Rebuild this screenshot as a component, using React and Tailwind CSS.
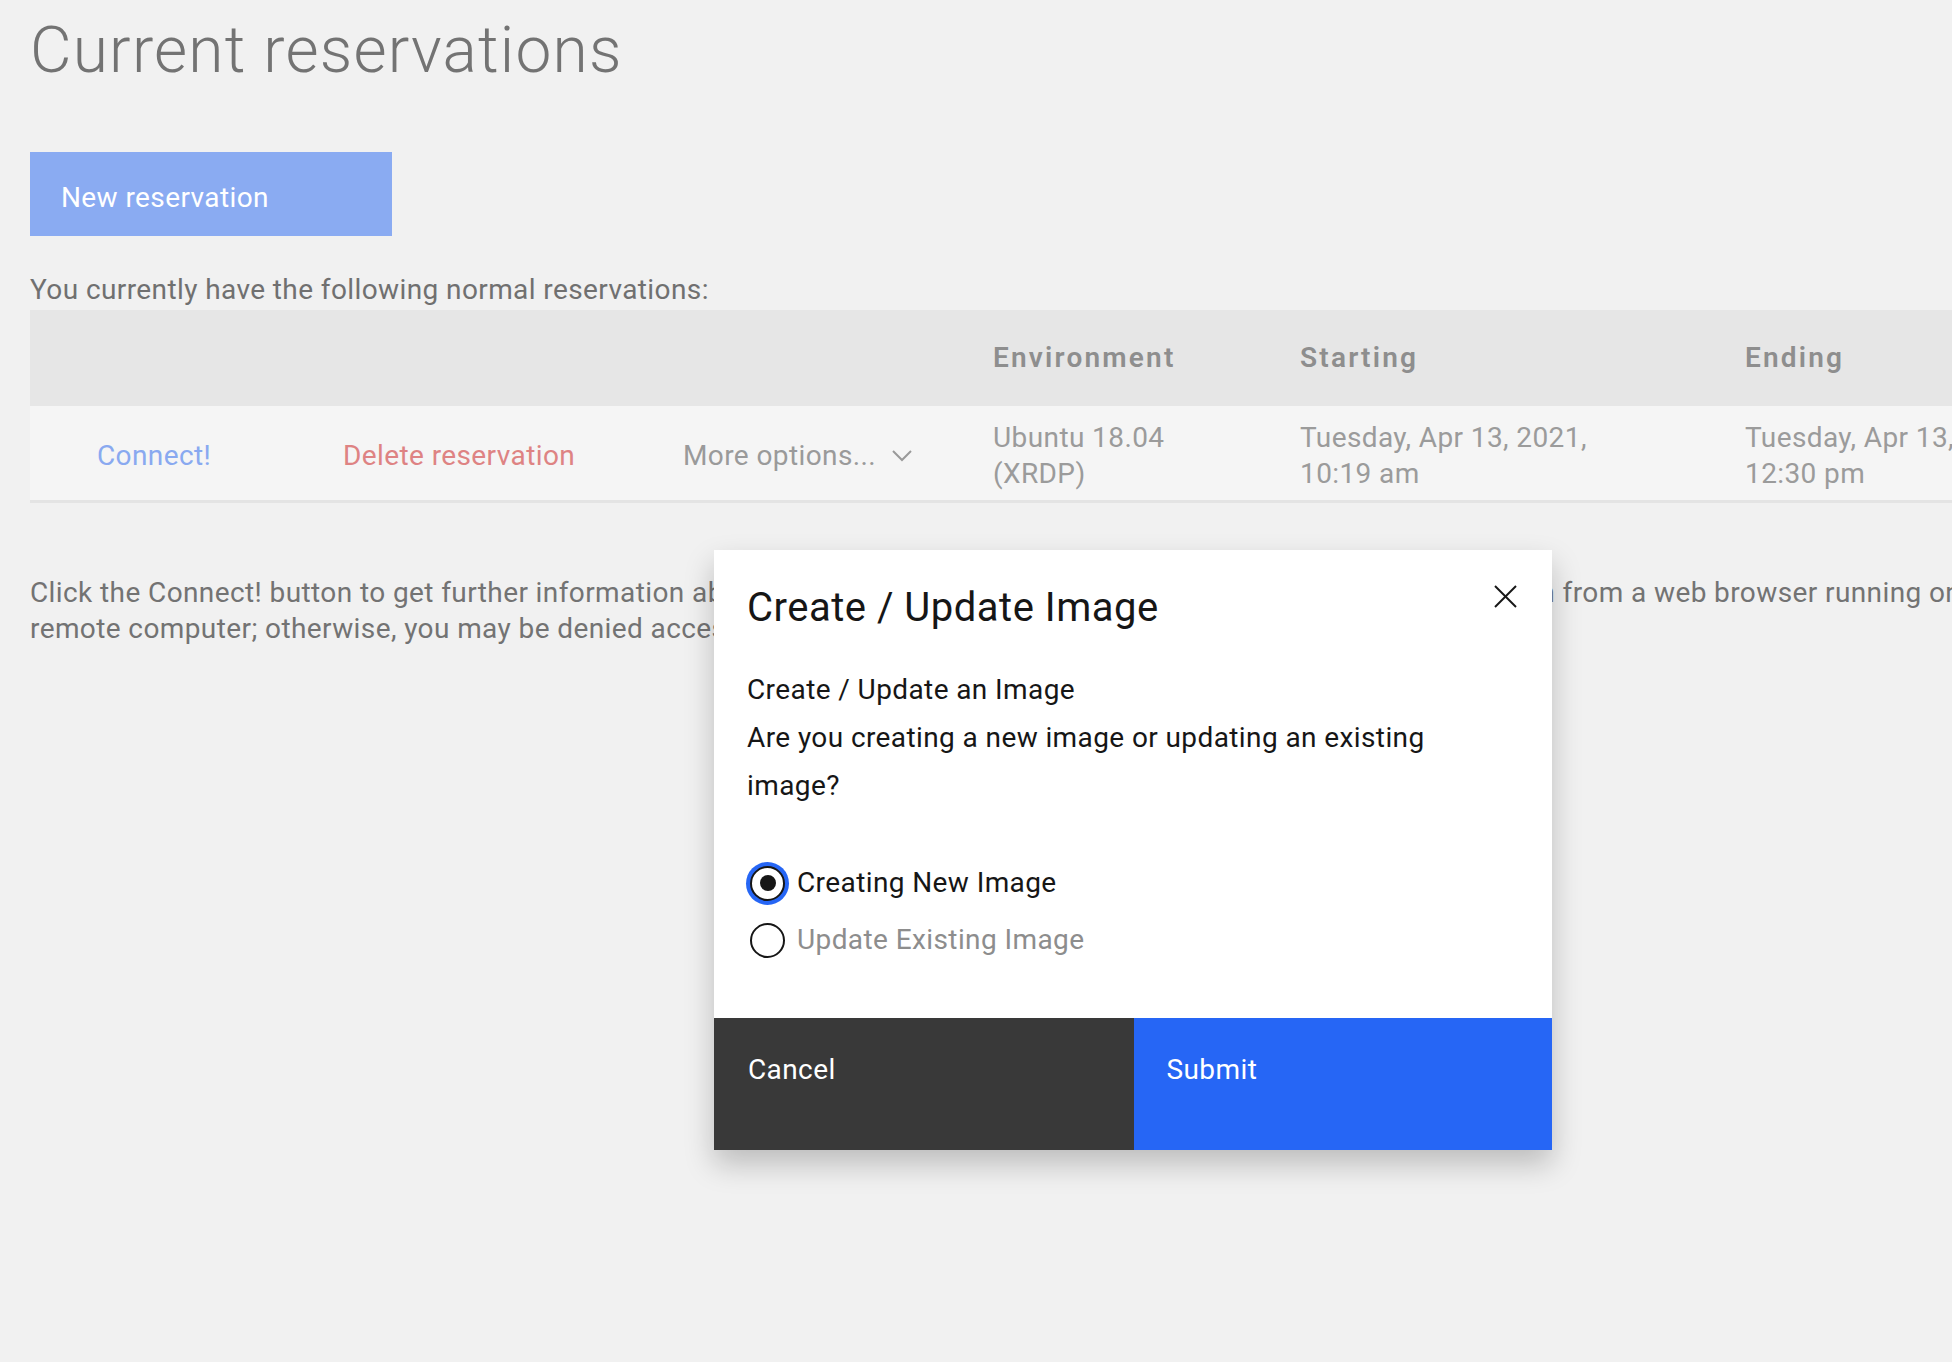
import React, { useState } from "react";

const font = { fontFamily: "Roboto, 'Liberation Sans', sans-serif" };

function Radio({ checked, label, onSelect }) {
  return (
    <button type="button" onClick={onSelect} className="flex h-[44px] items-center gap-[12px] text-left">
      <span
        className={`ml-[3px] flex h-[35px] w-[35px] items-center justify-center rounded-full border-[2.5px] border-[#161616] bg-white ${
          checked ? "shadow-[0_0_0_4px_#2666f5]" : ""
        }`}
      >
        {checked && <span className="h-[16px] w-[16px] rounded-full bg-[#161616]" />}
      </span>
      <span className={`text-[28px] leading-[36px] tracking-[0.4px] ${checked ? "text-[#161616]" : "text-[#8d8d8d]"}`}>{label}</span>
    </button>
  );
}

function ImageModal() {
  const [choice, setChoice] = useState("new");

  return (
    <div className="absolute left-[714px] top-[550px] flex h-[600px] w-[838px] flex-col bg-white shadow-[0_14px_28px_rgba(0,0,0,0.22)]">
      <button type="button" className="absolute right-[35px] top-[35px] h-[23px] w-[23px]">
        <svg viewBox="0 0 23 23" className="h-full w-full" fill="none" stroke="#161616" strokeWidth="2">
          <line x1="1" y1="1" x2="22" y2="22" />
          <line x1="22" y1="1" x2="1" y2="22" />
        </svg>
      </button>

      <div className="px-[33px] pt-[34px]">
        <h2 className="text-[40px] leading-[48px] font-normal tracking-[0.5px] text-[#161616]">Create / Update Image</h2>

        <div className="mt-[34px] max-w-[720px] text-[28px] leading-[48px] tracking-[0.4px] text-[#161616]">
          <p>Create / Update an Image</p>
          <p>Are you creating a new image or updating an existing image?</p>
        </div>

        <div className="mt-[51px] flex flex-col gap-[13px]">
          <Radio checked={choice === "new"} label="Creating New Image" onSelect={() => setChoice("new")} />
          <Radio checked={choice === "update"} label="Update Existing Image" onSelect={() => setChoice("update")} />
        </div>
      </div>

      <div className="mt-auto flex h-[132px]">
        <button type="button" className="flex flex-1 items-start bg-[#393939] pl-[34px] pt-[34px] text-left text-[28px] leading-[36px] tracking-[0.4px] text-white">
          Cancel
        </button>
        <button type="button" className="flex flex-1 items-start bg-[#2666f5] pl-[33px] pt-[34px] text-left text-[28px] leading-[36px] tracking-[0.4px] text-white">
          Submit
        </button>
      </div>
    </div>
  );
}

export default function App() {
  return (
    <div className="relative h-[1362px] w-[1952px] overflow-hidden bg-[#f1f1f1]" style={font}>
      <div className="w-[2600px] pl-[30px] pt-[19px] tracking-[0.4px]">
        <h1 className="text-[64px] leading-[64px] font-light tracking-[1.2px] text-[#737373]">Current reservations</h1>

        <button type="button" className="mt-[69px] flex h-[84px] w-[362px] items-center bg-[#8aabf2] pl-[31px] pt-[7px] text-[28px] tracking-[0.4px] text-white">
          New reservation
        </button>

        <p className="mt-[36px] text-[28px] leading-[36px] text-[#707070]">You currently have the following normal reservations:</p>

        <div className="mt-[2px] w-[2400px]">
          {/* header */}
          <div className="flex h-[96px] items-center bg-[#e6e6e6] text-[28px] font-semibold tracking-[2.2px] text-[#8e8e8e]">
            <div className="w-[963px]" />
            <div className="w-[307px]">Environment</div>
            <div className="w-[445px]">Starting</div>
            <div>Ending</div>
          </div>

          {/* row */}
          <div className="flex h-[97px] items-center border-b-[3px] border-[#e4e4e4] bg-[#f5f5f5] pt-[6px] text-[28px] leading-[36px]">
            <div className="w-[313px] pl-[67px] text-[#89a9f0]">Connect!</div>
            <div className="w-[340px] text-[#de8383]">Delete reservation</div>
            <div className="flex w-[310px] items-center gap-[16px] text-[#9a9a9a]">
              <span>More options...</span>
              <svg width="20" height="12" viewBox="0 0 20 12" fill="none" stroke="#9a9a9a" strokeWidth="2">
                <polyline points="1,1 10,10 19,1" />
              </svg>
            </div>
            <div className="w-[307px] text-[#9b9b9b]">
              Ubuntu 18.04
              <br />
              (XRDP)
            </div>
            <div className="w-[445px] text-[#9b9b9b]">
              Tuesday, Apr 13, 2021,
              <br />
              10:19 am
            </div>
            <div className="text-[#9b9b9b]">
              Tuesday, Apr 13, 2021,
              <br />
              12:30 pm
            </div>
          </div>
        </div>

        <p className="mt-[72px] whitespace-nowrap text-[28px] leading-[36px] text-[#737373]">
          Click the Connect! button to get further information about connecting to the reserved system. You must click the button from a web browser running on the same computer from which you will be connecting to the
          <br />
          remote computer; otherwise, you may be denied access to the remote computer.
        </p>
      </div>

      <ImageModal />
    </div>
  );
}
